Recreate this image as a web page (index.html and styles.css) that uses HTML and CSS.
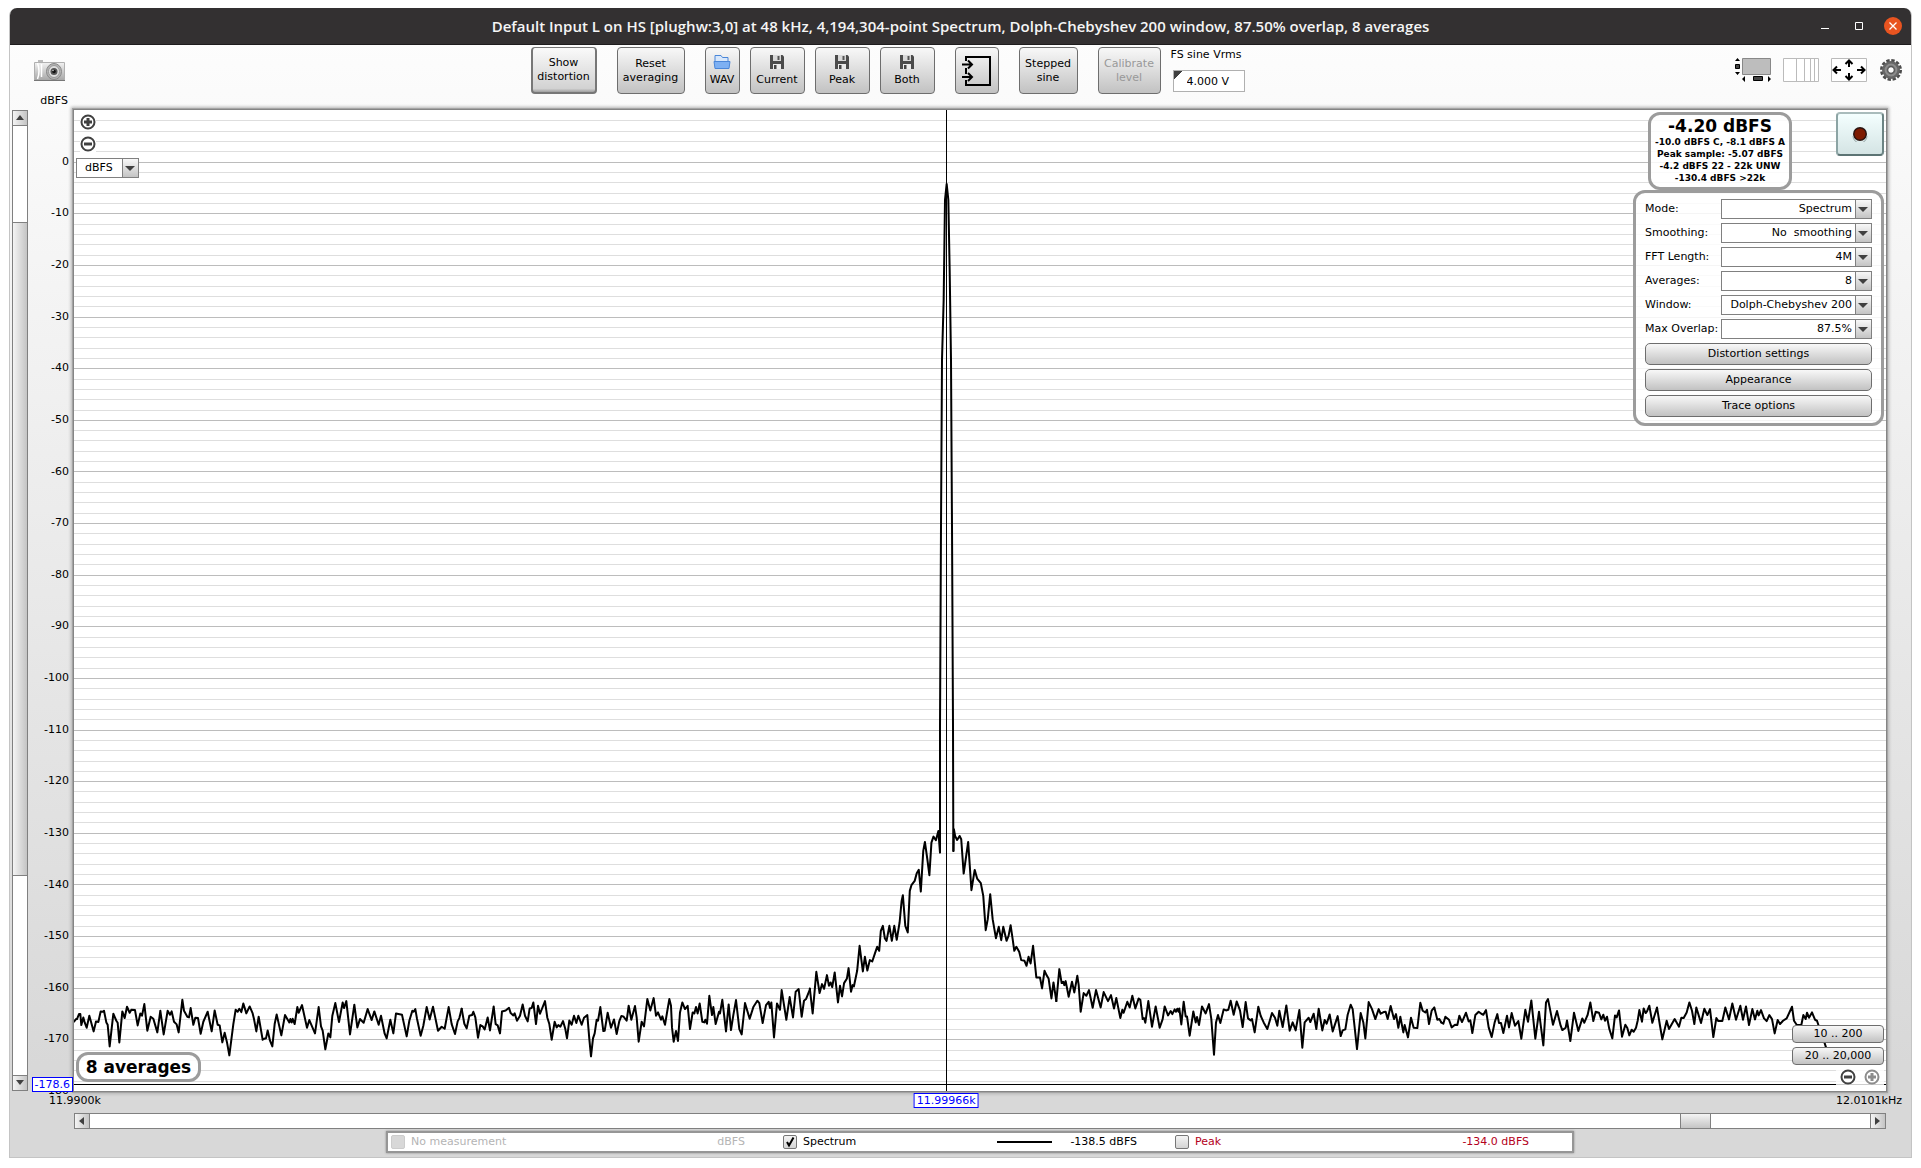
FILE: index.html
```html
<!DOCTYPE html>
<html lang="en">
<head>
<meta charset="utf-8">
<title>RTA Spectrum</title>
<link rel="stylesheet" href="styles.css">
</head>
<body>
<main class="window">
  <header class="titlebar">
    <h1>Default Input L on HS [plughw:3,0] at 48 kHz, 4,194,304-point Spectrum, Dolph-Chebyshev 200 window, 87.50% overlap, 8 averages</h1>
    <div class="window-controls">
      <button class="win-btn" aria-label="Minimize"><svg width="18" height="18"><path d="M5 11.500h8" stroke="#fff" fill="none"/></svg></button>
      <button class="win-btn" aria-label="Maximize"><svg width="18" height="18"><path d="M5.500 5.500h7v7h-7z" stroke="#fff" fill="none"/></svg></button>
      <button class="win-btn" aria-label="Close"><svg width="18" height="18"><circle cx="9" cy="9" r="9" fill="#e95420"/><path d="M5.500 5.500l7 7m0-7l-7 7" stroke="#fff" stroke-width="1.300"/></svg></button>
    </div>
  </header>

  <div class="toolbar">
    <button class="icon-btn" aria-label="Capture image">
      <svg width="31" height="22" viewBox="0 0 31 22">
        <defs><linearGradient id="cam" x2="0" y2="1"><stop offset="0" stop-color="#f2f2f2"/><stop offset="1" stop-color="#a5a5a5"/></linearGradient></defs>
        <path d="M4 2V0h5v2z" fill="#bbb"/>
        <path d="M0.500 2.500h30v18h-30z" fill="url(#cam)" stroke="#b0b0b0"/>
        <path d="M0 20.500h31" stroke="#777"/><path d="M3.500 3q3 8 0 16M7.500 4v13" stroke="#fff" fill="none" stroke-width="1.500"/>
        <ellipse cx="20" cy="11.500" rx="7.500" ry="8" fill="#b5b5b5" stroke="#888"/>
        <ellipse cx="20" cy="11.500" rx="5.500" ry="6" fill="#ddd" stroke="#999"/>
        <circle cx="20" cy="11.500" r="3.500" fill="#555"/><circle cx="20" cy="11.500" r="1.800" fill="#111"/><circle cx="19" cy="10.500" r=".8" fill="#ccc"/>
      </svg>
    </button>
    <div class="tools">
      <button class="btn tool on">Show<br>distortion</button>
      <button class="btn tool wide">Reset<br>averaging</button>
      <div class="files">
        <button class="btn tool slim"><svg width="18" height="16" viewBox="0 0 18 16"><path d="M2 1.500h6l1.500 2H15V9H2z" fill="#d7e7fb" stroke="#4a86d8"/><path d="M1 7.500h16l-1 7H2z" fill="#7db0f3" stroke="#4a86d8"/></svg>WAV</button>
        <button class="btn tool file"><svg width="16" height="16" viewBox="0 0 16 16"><path d="M1 1h12.500L15 2.500V15H1z" fill="#4b4b4b"/><path d="M4 1h8v6H4z" fill="#d9d9d9"/><path d="M8.500 2h2v4h-2z" fill="#555"/><path d="M4 10h8v5H4z" fill="#ececec"/><path d="M5 11h2.500v4H5z" fill="#444"/></svg>Current</button>
        <button class="btn tool file"><svg width="16" height="16" viewBox="0 0 16 16"><path d="M1 1h12.500L15 2.500V15H1z" fill="#4b4b4b"/><path d="M4 1h8v6H4z" fill="#d9d9d9"/><path d="M8.500 2h2v4h-2z" fill="#555"/><path d="M4 10h8v5H4z" fill="#ececec"/><path d="M5 11h2.500v4H5z" fill="#444"/></svg>Peak</button>
        <button class="btn tool file"><svg width="16" height="16" viewBox="0 0 16 16"><path d="M1 1h12.500L15 2.500V15H1z" fill="#4b4b4b"/><path d="M4 1h8v6H4z" fill="#d9d9d9"/><path d="M8.500 2h2v4h-2z" fill="#555"/><path d="M4 10h8v5H4z" fill="#ececec"/><path d="M5 11h2.500v4H5z" fill="#444"/></svg>Both</button>
      </div>
      <button class="btn tool input" aria-label="Input options"><svg width="30" height="32" viewBox="0 0 30 32" fill="none" stroke="#000"><path d="M4 6V2h24v28H4v-5M4 13v6" stroke-width="2"/><path d="M0 9.500h10M6 5.500l4 4-4 4M0 22h10M6 18l4 4-4 4" stroke-width="2"/></svg></button>
      <button class="btn tool step">Stepped<br>sine</button>
      <button class="btn tool cal" disabled>Calibrate<br>level</button>
      <div class="fs">
        <label for="vrms">FS sine Vrms</label>
        <input id="vrms" type="text" value="4.000 V">
      </div>
    </div>
    <div class="view-icons">
      <button class="icon-btn" aria-label="Scrollbars"><svg width="36" height="24" viewBox="0 0 36 24"><path d="M7.500.5h28v16h-28z" fill="#bdbdbd" stroke="#888"/><path d="M0 3l2.500-3L5 3zM0 14h5l-2.500 3zM10 18v6l-3-3zM33 18v6l3-3z"/><path d="M.5 6.500h4v4h-4zM18.500 18.500h9v4h-9z" fill="#444" stroke="#000"/></svg></button>
      <button class="icon-btn" aria-label="Frequency axis"><svg width="36" height="24" viewBox="0 0 36 24"><path d="M.5.5h35v23H.5zM13.500 0v24M21.500 0v24M27.500 0v24M31.500 0v24" fill="#fff" stroke="#bbb"/></svg></button>
      <button class="icon-btn" aria-label="Graph limits"><svg width="36" height="24" viewBox="0 0 36 24"><path d="M.5.5h35v23H.5z" fill="#fff" stroke="#bbb"/><path d="M18 9V2.500M14.500 6L18 2.500 21.500 6M18 15v6.500M14.500 18l3.500 3.500 3.500-3.500M10 12H2.500M6 8.500L2.500 12 6 15.500M26 12h7.500M30 8.500l3.500 3.500-3.500 3.500" fill="none" stroke="#000" stroke-width="2"/></svg></button>
      <button class="icon-btn" aria-label="Settings"><svg width="24" height="24" viewBox="-12 -12 24 24"><circle r="9.500" fill="none" stroke="#4c4c4c" stroke-width="3" stroke-dasharray="3.300 1.674"/><circle r="6" fill="none" stroke="#666" stroke-width="6"/><circle r="5.400" fill="none" stroke="#8c8c8c" stroke-width="2"/><circle r="3.300" fill="#fafafa" stroke="#444"/></svg></button>
    </div>
  </div>

  <section class="workspace">
    <div class="axis-title">dBFS</div>
    <div class="scroll vertical">
      <button class="scroll-btn" aria-label="Scroll up"><svg width="8" height="6"><path d="M0 5l4-5 4 5z"/></svg></button>
      <div class="rest-a"></div><div class="thumb"></div><div class="rest-b"></div>
      <button class="scroll-btn" aria-label="Scroll down"><svg width="8" height="6"><path d="M0 0h8L4 5z"/></svg></button>
    </div>
    <div class="y-axis">
      <ul>
        <li>0</li><li>-10</li><li>-20</li><li>-30</li><li>-40</li><li>-50</li><li>-60</li><li>-70</li><li>-80</li><li>-90</li><li>-100</li><li>-110</li><li>-120</li><li>-130</li><li>-140</li><li>-150</li><li>-160</li><li>-170</li><li>-180</li>
      </ul>
      <output class="readout y-cursor">-178.6</output>
    </div>
    <div class="plot">
      <svg class="graph" viewBox="0 0 5436 2946" preserveAspectRatio="none" aria-label="Spectrum trace">
        <g id="grid"></g>
        <path class="cursor" d="M2617 0V2946M0 2925H5436"/>
        <g class="trace">
          <polyline transform="translate(-12 2610)" points="12,128 18,120 21,120 27,105 31,105 34,138 40,115 44,130 50,146 58,110 71,157 78,127 85,129 92,97 99,98 102,95 109,130 113,137 119,202 130,104 139,125 143,131 148,190 157,97 164,117 171,83 179,101 184,92 195,93 203,139 211,103 216,110 223,75 232,155 242,113 250,119 262,160 271,95 281,166 293,95 300,107 305,97 312,128 320,136 326,160 337,62 342,95 352,113 357,115 362,87 370,137 376,116 384,117 392,164 400,128 413,98 425,157 434,94 443,137 449,139 457,190 464,161 471,190 478,229 490,135 497,92 503,98 508,89 514,99 520,73 529,103 539,82 548,103 552,120 559,157 566,113 578,182 585,178 588,178 593,154 600,185 607,202 614,135 620,106 634,169 645,108 658,130 661,120 665,130 668,119 674,135 682,84 686,101 696,78 711,146 718,123 735,163 746,84 753,142 758,155 766,211 775,163 781,175 787,110 796,72 807,129 818,70 822,87 829,66 840,166 853,77 862,145 870,120 881,131 893,90 905,123 913,97 926,137 933,110 944,164 950,178 961,122 970,163 978,103 996,107 1010,172 1018,125 1027,95 1031,98 1036,90 1041,119 1052,170 1060,140 1070,84 1079,121 1089,83 1104,155 1115,143 1124,149 1136,84 1145,135 1155,165 1163,127 1168,117 1175,89"/>
          <polyline transform="translate(1158 2610)" points="5,89 13,134 20,148 28,110 36,108 40,98 46,115 54,176 61,138 68,142 74,151 83,115 90,154 101,82 107,135 113,139 120,163 126,97 137,94 147,86 152,102 160,109 164,103 171,125 180,110 188,76 195,110 203,127 209,88 215,87 220,70 228,135 234,80 240,104 255,66 262,116 268,135 275,182 284,128 290,145 295,138 301,143 309,126 316,150 321,178 328,124 335,137 342,110 349,132 355,110 365,137 372,116 382,108 388,180 393,232 399,178 404,163 410,122 414,125 421,84 430,156 434,155 443,101 453,146 462,121 470,165 478,126 484,111 490,112 500,125 506,80 514,122 525,81 530,115 536,188 545,128 552,142 562,60 571,94 581,57 588,110 594,100 603,122 607,112 615,137 622,95 628,60 633,80 636,145 641,188 648,156 654,186 660,100 667,70 675,90 683,80 690,150 698,100 703,103 708,84 713,103 719,73 727,128 733,130 736,122 741,134 748,50 756,108 760,84 767,135 777,98 780,103 787,62 798,157 806,76 813,153 820,108 828,63 838,150 845,166 855,72 869,119 880,84 892,65 898,72 908,132 918,78 926,68 930,87 934,70 942,175 951,73 960,92 965,33 979,122 989,54 999,115 1007,38 1016,30 1025,113 1032,65 1038,60 1050,30"/>
          <polyline transform="translate(1698 2010) scale(1.2245 1)" points="416,628 423,703 432,578 440,642 446,615 451,629 458,588 463,620 467,610 471,624 477,580 485,670 490,620 495,652 500,612 507,598 511,567 517,638 521,618 524,622 532,575 538,500 546,577 551,533 557,574 563,543 569,547 575,525 581,503 586,515 590,455 595,440 600,478 604,485 611,440 617,485 623,440 629,482 636,430 641,365 644,348 650,440 656,460 661,335 665,318 673,305 678,282 683,272 688,337 694,215 698,188 704,240 709,288 714,190 719,172 725,183 731,155 735,220"/>
          <polyline points="2598,2229 2598,1850 2601,1251 2604,750 2609,570 2613,270 2618,222 2623,270 2627,480 2631,750 2634,1251 2637,1850 2638,2225"/>
          <polyline transform="translate(1698 2010) scale(1.2245 1)" points="768,215 769,150 772,170 777,182 783,170 787,180 793,283 798,240 804,188 812,333 820,272 826,298 835,312 841,350 847,453 852,420 858,345 864,420 872,477 879,443 885,483 890,443 898,485 903,470 908,438 913,480 917,515 922,503 929,518 934,543 942,545 947,560 952,533 957,553 963,500 971,595 980,595 985,628 991,575 996,588 1001,598 1008,658 1013,610 1020,666"/>
          <polyline transform="translate(2928 2580)" points="19,96 28,0 35,42 40,38 43,48 47,36 56,83 66,38 73,70 82,20 86,47 92,128 101,72 109,80 117,63 128,116 138,63 152,115 161,69 174,96 183,78 192,118 199,87 211,147 217,122 221,131 232,98 239,115 247,80 256,118 266,88 271,92 278,150 282,147 286,161 295,96 306,173 317,112 329,176 338,150 344,112 354,139 362,126 367,135 374,121 378,128 382,119 386,128 388,118 394,166 401,98 407,142 411,142 419,200 430,127 437,160 441,144 447,168 456,112 467,133 477,105 484,150 492,257 498,160 504,138 511,162 521,121 528,124 535,122 542,95 551,137 560,97 570,124 578,174 587,99 594,148 602,154 606,150 614,190 625,113 632,140 641,160 652,180 666,132 675,146 682,170 688,125 698,174 709,109 719,185 728,160 737,184 748,123 757,236 764,160 776,146 781,159 791,134 799,180 806,119 817,184 824,153 830,164 839,136 848,187 863,141 872,201 878,184 886,181 893,137 902,107 908,120 921,240 932,132 940,160 946,208 956,99 966,120 976,150 986,120 992,134 1001,129 1007,128 1013,150 1022,111 1032,150 1038,135 1045,176 1051,143 1060,190 1064,168 1074,205 1083,146 1091,176 1102,177 1111,101 1118,125 1126,130 1131,122 1137,165 1145,125 1153,115 1162,152 1168,150 1174,160"/>
          <polyline transform="translate(4098 2610)" points="4,130 10,134 16,113 27,122 35,145 45,137 52,138 58,110 66,129 78,101 86,127 91,124 97,162 106,108 116,98 124,104 130,107 138,93 146,145 155,174 164,130 172,105 177,132 183,132 190,162 201,110 207,145 215,102 225,140 235,126 244,179 256,92 264,128 274,64 286,179 297,98 310,199 318,70 324,60 330,90 339,137 351,96 362,140 367,153 377,146 381,124 391,186 402,101 415,156 427,118 433,131 443,107 451,70 460,126 467,98 477,101 484,121 490,107 495,125 501,113 508,150 517,178 525,109 530,115 537,94 546,173 556,137 562,147 568,169 575,152 581,158 588,146 593,125 598,93 606,128 611,88 617,102 621,97 628,80 637,131 651,85 660,140 667,181 680,125 687,150 704,120 717,143 724,116 731,117 740,100 748,70 756,95 763,135 769,85 783,132 793,89 802,108 810,90 820,174 829,117 835,126 847,126 856,85 867,121 877,73 888,122 901,80 909,122 918,82 927,138 937,90 945,121 952,95 956,109 963,93 972,118 980,126 988,108 996,120 1004,163 1013,123 1020,135 1029,125 1040,118 1056,83 1062,125 1070,137 1084,138 1090,108 1097,120 1101,101 1107,116 1116,100 1125,122 1131,125 1136,140 1150,180 1158,205"/>
        </g>
      </svg>
      <div class="left-tools">
        <button class="zoom" aria-label="Zoom in vertically"><svg width="16" height="16"><circle cx="8" cy="8" r="6.500" fill="#fff" stroke="#404040" stroke-width="2"/><path d="M4 8h8M8 4v8" stroke="#404040" stroke-width="3"/></svg></button>
        <button class="zoom" aria-label="Zoom out vertically"><svg width="16" height="16"><circle cx="8" cy="8" r="6.500" fill="#fff" stroke="#404040" stroke-width="2"/><path d="M4 8h8" stroke="#404040" stroke-width="3"/></svg></button>
        <select class="combo units" aria-label="Units"><option>dBFS</option></select>
      </div>
      <div class="panels">
        <div class="top-row">
          <div class="level"><strong>-4.20 dBFS</strong><span>-10.0 dBFS C, -8.1 dBFS A</span><span>Peak sample: -5.07 dBFS</span><span>-4.2 dBFS 22 - 22k UNW</span><span>-130.4 dBFS &gt;22k</span></div>
          <button class="record" aria-label="Record"><svg width="16" height="16"><circle cx="8" cy="8" r="7" fill="#2a1410"/><circle cx="8" cy="8" r="5.500" fill="#7d1a00"/><path d="M1 10a7 7 0 0 0 14 0" fill="none" stroke="#9aa" /></svg></button>
        </div>
        <form class="settings">
          <label for="mode">Mode:</label><select id="mode" class="combo"><option>Spectrum</option></select>
          <label for="smoothing">Smoothing:</label><select id="smoothing" class="combo"><option>No&nbsp; smoothing</option></select>
          <label for="fft">FFT Length:</label><select id="fft" class="combo"><option>4M</option></select>
          <label for="avg">Averages:</label><select id="avg" class="combo"><option>8</option></select>
          <label for="win">Window:</label><select id="win" class="combo"><option>Dolph-Chebyshev 200</option></select>
          <label for="overlap">Max Overlap:</label><select id="overlap" class="combo"><option>87.5%</option></select>
          <div class="setting-buttons">
            <button type="button" class="btn">Distortion settings</button>
            <button type="button" class="btn">Appearance</button>
            <button type="button" class="btn">Trace options</button>
          </div>
        </form>
      </div>
      <div class="average-count">8 averages</div>
      <div class="ranges">
        <button class="btn">10 .. 200</button>
        <button class="btn">20 .. 20,000</button>
        <div class="range-zoom">
          <button class="zoom" aria-label="Zoom out horizontally"><svg width="16" height="16"><circle cx="8" cy="8" r="6.500" fill="#fff" stroke="#404040" stroke-width="2"/><path d="M4 8h8" stroke="#404040" stroke-width="3"/></svg></button>
          <button class="zoom" aria-label="Zoom in horizontally" disabled><svg width="16" height="16"><circle cx="8" cy="8" r="6.500" fill="#fff" stroke="#8c8c8c" stroke-width="2"/><path d="M4 8h8M8 4v8" stroke="#8c8c8c" stroke-width="3"/></svg></button>
        </div>
      </div>
    </div>
    <div class="x-axis"><span>11.9900k</span><span>12.0101kHz</span><output class="readout x-cursor" style="left: 48.14%">11.99966k</output></div>
    <div class="scroll horizontal">
      <button class="scroll-btn" aria-label="Scroll left"><svg width="6" height="8"><path d="M5 0v8L0 4z"/></svg></button>
      <div class="rest-a"></div><div class="thumb"></div><div class="rest-b"></div>
      <button class="scroll-btn" aria-label="Scroll right"><svg width="6" height="8"><path d="M0 0v8l5-4z"/></svg></button>
    </div>
    <div class="legend">
      <div class="trace-item off"><label><input type="checkbox" disabled>No measurement</label><span class="value">dBFS</span></div>
      <div class="trace-item"><label><input type="checkbox" checked>Spectrum</label><i class="swatch"></i><span class="value">-138.5 dBFS</span></div>
      <div class="trace-item peak"><label><input type="checkbox">Peak</label><span class="value">-134.0 dBFS</span></div>
    </div>
  </section>
</main>
<script src="grid.js"></script>
</body>
</html>
```
FILE: grid.js
```js
// Horizontal divisions: one line per 2 dB, a darker one per 10 dB.
const grid = document.getElementById('grid');
const unitsPerStep = 31;
const zeroLine = 157;
for (let step = -4; step <= 90; step++) {
  const line = document.createElementNS('http://www.w3.org/2000/svg', 'line');
  const y = zeroLine + step * unitsPerStep;
  if (y > 2946) break;
  line.setAttribute('x1', 0);
  line.setAttribute('x2', 5436);
  line.setAttribute('y1', y);
  line.setAttribute('y2', y);
  line.setAttribute('class', step % 5 === 0 ? 'major' : 'minor');
  grid.appendChild(line);
}
```
FILE: styles.css
```css
* { box-sizing: border-box; }

body {
  margin: 0;
  padding: 8px 9px 10px;
  min-height: 100vh;
  display: flex;
  flex-direction: column;
  background: #fff;
  color: #000;
  font: 11px/14px "DejaVu Sans", sans-serif;
}

button, input, select { font: inherit; color: inherit; margin: 0; }
svg { display: block; }
ul { list-style: none; margin: 0; padding: 0; }

.window {
  flex: 1;
  display: flex;
  flex-direction: column;
  border: 1px solid #c4c4c4;
  border-top: 0;
  border-radius: 8px 8px 0 0;
  background: linear-gradient(#fefefe, #d8d8d8 92%);
}

.titlebar {
  position: relative;
  height: 37px;
  display: flex;
  align-items: center;
  justify-content: center;
  background: #333031;
  border-bottom: 1px solid #1e1c1d;
  border-radius: 7px 7px 0 0;
}
.titlebar h1 {
  margin: 0;
  color: #f5f5f5;
  font: 600 15px/20px "Open Sans", "Noto Sans", sans-serif;
}
.window-controls {
  position: absolute;
  right: 9px;
  display: flex;
  gap: 16px;
}
.win-btn, .icon-btn, .zoom {
  padding: 0;
  border: 0;
  background: none;
}

.toolbar {
  display: flex;
  justify-content: space-between;
  align-items: flex-start;
  padding: 2px 8px 0 24px;
}
.toolbar > .icon-btn { margin-top: 13px; }
.tools { display: flex; gap: 20px; }
.files { display: flex; gap: 10px; }
.view-icons { display: flex; gap: 12px; padding-top: 11px; }

.btn {
  padding: 0;
  border: 1px solid #6e6e6e;
  border-radius: 4px;
  background: linear-gradient(#f8f8f8, #c2c2c2);
}
.tool {
  height: 47px;
  display: flex;
  flex-direction: column;
  align-items: center;
  justify-content: center;
}
.tool svg { margin-bottom: 3px; }
.on {
  width: 66px;
  border: 2px solid #777;
  border-top-width: 1px;
  background: linear-gradient(#fafafa, #d2d2d2 92%, #a0a0a0);
}
.wide { width: 68px; }
.slim { width: 35px; }
.file { width: 55px; }
.input { width: 44px; }
.input svg { margin: 0; }
.step { width: 59px; }
.cal { width: 63px; color: #999; }

.fs {
  width: 99px;
  margin-left: -10px;
  padding-top: 1px;
  display: flex;
  flex-direction: column;
  gap: 8px;
}
.fs input {
  width: 72px;
  height: 22px;
  margin-left: 2px;
  padding: 0 13px;
  border: 1px solid #b0b0b0;
  background: linear-gradient(135deg, #404040 6px, #fff 6px);
}

.workspace {
  flex: 1;
  display: grid;
  grid-template: 16px 1fr 22px 16px 24px / 16px 46px 1fr;
  padding: 0 25px 4px 2px;
}
.axis-title { grid-area: 1 / 2; text-align: right; padding-right: 6px; }

.scroll { display: flex; border: 1px solid #808080; background: #fff; }
.vertical { grid-area: 2 / 1; flex-direction: column; }
.horizontal { grid-area: 4 / 3; }
.scroll-btn, .thumb {
  padding: 0;
  border: 0 solid #808080;
  display: flex;
  align-items: center;
  justify-content: center;
  background: linear-gradient(90deg, #f4f4f4, #c4c4c4);
}
.scroll-btn { flex: 0 0 15px; }
.scroll-btn svg { fill: #404040; }
.vertical .scroll-btn:first-child { border-bottom-width: 1px; }
.vertical .scroll-btn:last-child { border-top-width: 1px; }
.horizontal .scroll-btn:first-child { border-right-width: 1px; }
.horizontal .scroll-btn:last-child { border-left-width: 1px; }
.vertical .thumb { flex: 654; border-width: 1px 0; }
.vertical .rest-a { flex: 96; }
.vertical .rest-b { flex: 200; }
.horizontal .thumb { flex: 29; border-width: 0 1px; background: linear-gradient(#f4f4f4, #c4c4c4); }
.horizontal .rest-a { flex: 1592; }
.horizontal .rest-b { flex: 159; }

.y-axis { grid-area: 2 / 2; position: relative; }
.y-axis ul {
  height: 100%;
  padding-right: 5px;
  display: flex;
  flex-direction: column;
  transform: translateY(26px);
}
.y-axis li {
  flex: 1;
  display: flex;
  align-items: center;
  justify-content: flex-end;
}
.readout {
  position: absolute;
  height: 15px;
  padding: 0 2px;
  border: 1px solid #00f;
  background: #fff;
  color: #00f;
  line-height: 14px;
}
.y-cursor { right: 1px; bottom: -1px; z-index: 1; }
.x-cursor { top: 2px; transform: translateX(-50%); }

.plot {
  grid-area: 2 / 3;
  position: relative;
  background: #fff;
  box-shadow: 0 0 0 1px #858585, 0 0 0 2px #a4a4a4, 0 0 3px 3px #b4b4b4;
}
.graph { position: absolute; inset: 0; width: 100%; height: 100%; }
.graph line, .cursor { vector-effect: non-scaling-stroke; shape-rendering: crispEdges; stroke-width: 1; }
.minor { stroke: #dedede; }
.major { stroke: #bcbcbc; }
.cursor { stroke: #000; fill: none; }
.trace polyline {
  fill: none;
  stroke: #000;
  stroke-width: 2;
  stroke-linejoin: round;
  stroke-linecap: round;
  vector-effect: non-scaling-stroke;
}

.left-tools {
  position: absolute;
  left: 2px;
  top: 4px;
  display: flex;
  flex-direction: column;
  align-items: flex-start;
  gap: 6px;
}
.left-tools .zoom { margin-left: 4px; background: #fff; }

.combo {
  appearance: none;
  height: 20px;
  min-width: 0;
  padding: 0 19px 0 6px;
  border: 1px solid #808080;
  border-radius: 0;
  text-align: right;
  text-align-last: right;
  background:
    url("data:image/svg+xml,%3Csvg xmlns='http://www.w3.org/2000/svg' width='10' height='6'%3E%3Cpath d='M0 0h10L5 5z' fill='%23404040'/%3E%3C/svg%3E") right 3px top 7px no-repeat,
    linear-gradient(#808080, #808080) right 15px top / 1px 100% no-repeat,
    linear-gradient(#f8f8f8, #c4c4c4) right / 15px 100% no-repeat,
    #fff;
}
.units { width: 63px; padding-left: 8px; text-align: left; text-align-last: left; }

.panels {
  position: absolute;
  right: 2px;
  top: 2px;
  width: 251px;
}
.top-row { display: flex; justify-content: space-between; padding-left: 15px; }
.level, .settings, .average-count {
  border: 3px solid #9c9c9c;
  border-radius: 12px;
  background: rgba(255, 255, 255, .85);
}
.level {
  width: 144px;
  height: 78px;
  padding-top: 2px;
  text-align: center;
  font: bold 9px/12px "DejaVu Sans", sans-serif;
}
.level strong { display: block; font-size: 17px; line-height: 19px; }
.level span { display: block; white-space: nowrap; }
.record {
  width: 48px;
  height: 44px;
  display: flex;
  align-items: center;
  justify-content: center;
  border: 2px solid #7f9898;
  border-color: #a9bcbc #6c8484 #5c7474 #8ca4a4;
  border-radius: 4px;
  background: linear-gradient(#f4ffff, #d4e4e4);
}
.settings {
  display: grid;
  grid-template-columns: 76px 1fr;
  gap: 4px 0;
  align-items: center;
  padding: 6px 9px;
  height: 236px;
}
.setting-buttons {
  grid-column: 1 / 3;
  display: flex;
  flex-direction: column;
  gap: 4px;
}
.settings .btn { height: 22px; border-radius: 5px; }

.average-count {
  position: absolute;
  left: 2px;
  bottom: 9px;
  width: 125px;
  height: 30px;
  text-align: center;
  font-weight: bold;
  font-size: 17px;
  line-height: 24px;
}
.ranges {
  position: absolute;
  right: 2px;
  bottom: 6px;
  width: 92px;
  display: flex;
  flex-direction: column;
  gap: 4px;
}
.ranges .btn { height: 18px; }
.range-zoom {
  align-self: flex-end;
  display: flex;
  gap: 8px;
  padding: 0 4px;
  background: rgba(255, 255, 255, .8);
}

.x-axis {
  grid-area: 3 / 3;
  position: relative;
  display: flex;
  justify-content: space-between;
  padding-top: 3px;
}
.x-axis span:first-child { margin-left: -25px; }
.x-axis span:nth-child(2) { margin-right: -16px; }

.legend {
  grid-area: 5 / 3;
  justify-self: center;
  width: 1188px;
  max-width: 100%;
  margin-top: 2px;
  display: grid;
  grid-template-columns: repeat(3, 1fr);
  align-items: center;
  padding: 0 5px 0 3px;
  border: 2px solid #969696;
  background: #fff;
  box-shadow: 0 0 2px #888;
}
.trace-item { display: flex; align-items: center; padding-right: 38px; }
.trace-item label { display: flex; align-items: center; gap: 6px; }
.trace-item input {
  appearance: none;
  width: 14px;
  height: 14px;
  border: 1px solid #777;
  border-radius: 2px;
  background: linear-gradient(#f4f4f4, #d4d4d4);
}
.trace-item input:checked {
  background:
    url("data:image/svg+xml,%3Csvg xmlns='http://www.w3.org/2000/svg' width='12' height='12'%3E%3Cpath d='M3 6l2 3.500L9.500 1.500' fill='none' stroke='black' stroke-width='2'/%3E%3C/svg%3E"),
    linear-gradient(#f4f4f4, #d4d4d4);
}
.trace-item.off { color: #b4b4b4; }
.trace-item.off input { border-color: #ccc; background: #d8d8d8; }
.trace-item.peak { color: #b40020; }
.value { margin-left: auto; }
.swatch { width: 55px; height: 2px; margin-left: auto; background: #000; }
.swatch + .value { margin-left: 18px; }
```
